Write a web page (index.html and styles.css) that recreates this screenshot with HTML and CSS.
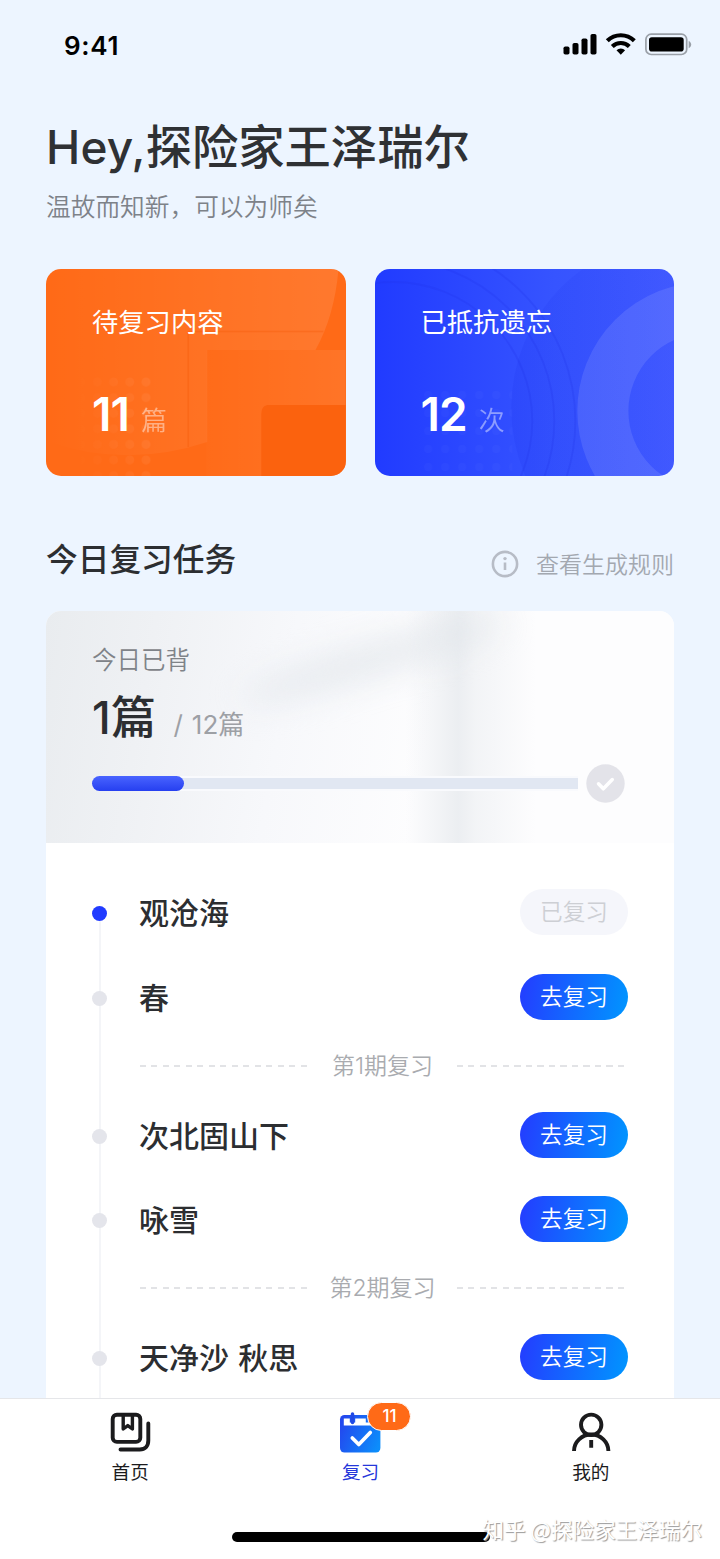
FILE: index.html
```html
<!DOCTYPE html>
<html lang="zh-CN">
<head>
<meta charset="utf-8">
<meta name="viewport" content="width=device-width, initial-scale=1">
<title>复习</title>
<link rel="stylesheet" href="styles.css">
</head>
<body>
<div class="app">
  <header class="status">
    <span class="time">9:41</span>
    <svg class="status-icons" width="130" height="24" viewBox="0 0 130 24">
      <rect x="0.500" y="13.500" width="6" height="8" rx="1.800"/>
      <rect x="9.500" y="10" width="6" height="11.500" rx="1.800"/>
      <rect x="18.500" y="5.500" width="6" height="16" rx="1.800"/>
      <rect x="27.500" y="1" width="6" height="20.500" rx="1.800"/>
      <g fill="none" stroke="#000" stroke-width="4.200">
        <path d="M44.300 7.800a19.200 19.200 0 0 1 27 0"/>
        <path d="M49.300 13.400a12.300 12.300 0 0 1 17 0"/>
      </g>
      <path d="M57.800 21.700l-4.300-4.400a6.300 6.300 0 0 1 8.600 0z"/>
      <rect x="82.900" y="1.200" width="40.800" height="20.300" rx="5.300" fill="none" stroke="#9aa0a8" stroke-width="1.700"/>
      <rect x="86" y="4.200" width="34.700" height="14.300" rx="2.800"/>
      <path d="M125.700 8v7.200c1.500-.6 2.500-2 2.500-3.600s-1-3-2.500-3.600z" fill="#9aa0a8"/>
    </svg>
  </header>

  <main class="content">
    <h1 class="title"><span class="hey">Hey,</span>探险家王泽瑞尔</h1>
    <p class="subtitle">温故而知新，可以为师矣</p>

    <section class="cards">
      <article class="card card-orange">
        <svg class="card-art" viewBox="0 0 299 207" preserveAspectRatio="none">
          <defs>
            <linearGradient id="og" x1="0" y1="0" x2="1" y2="0"><stop offset="0" stop-color="#fff" stop-opacity="0"/><stop offset="1" stop-color="#fff" stop-opacity=".1"/></linearGradient>
            <linearGradient id="oh" x1="0" y1="0" x2="1" y2="0"><stop offset="0" stop-color="#fff" stop-opacity=".01"/><stop offset="1" stop-color="#fff" stop-opacity=".07"/></linearGradient>
            <linearGradient id="df" x1="0" y1="0" x2="1" y2="0"><stop offset="0" stop-color="#fff" stop-opacity="0"/><stop offset="1" stop-color="#fff" stop-opacity=".08"/></linearGradient>
            <pattern id="dots" x="27" y="105" width="16.200" height="15.600" patternUnits="userSpaceOnUse"><circle cx="8" cy="8" r="4.600" fill="#fff"/></pattern>
            <mask id="fade"><rect x="25" y="90" width="80" height="117" fill="url(#df)"/></mask>
          </defs>
          <path d="M0 0H292Q288 47 269 81H161V173Q80 200 0 172z" fill="url(#og)"/>
          <path d="M142 62.500H277M142 62.500V178" fill="none" stroke="#f05300" stroke-opacity=".28" stroke-width="1.600"/>
          <path d="M160 81H299V136H221Q215 137 215 145V207H160z" fill="url(#oh)"/>
          <path d="M299 136H221Q215 137 215 145V207H299z" fill="#f85e08" fill-opacity=".6"/>
          <rect x="27" y="105" width="81" height="102" fill="url(#dots)" mask="url(#fade)" opacity=".75"/>
        </svg>
        <h2 class="card-name">待复习内容</h2>
        <p class="card-value"><b>11</b><span>篇</span></p>
      </article>
      <article class="card card-blue">
        <svg class="card-art" viewBox="0 0 299 207" preserveAspectRatio="none">
          <defs>
            <pattern id="bdots" x="45" y="118" width="17" height="18" patternUnits="userSpaceOnUse"><circle cx="8" cy="8" r="4" fill="#fff" fill-opacity=".02"/></pattern>
            <linearGradient id="bg1" x1="0" y1="0" x2="1" y2="0"><stop offset="0" stop-color="#2038f0" stop-opacity=".22"/><stop offset=".5" stop-color="#2038f0" stop-opacity="0"/></linearGradient>
          </defs>
          <circle cx="307" cy="139" r="171" fill="url(#bg1)"/>
          <g fill="none" stroke="#2234e8" stroke-opacity=".22" stroke-width="1.800">
            <circle cx="18" cy="152" r="139"/><circle cx="18" cy="152" r="161"/><circle cx="18" cy="152" r="182"/>
          </g>
          <circle cx="331" cy="142" r="103.500" fill="none" stroke="#fff" stroke-opacity=".1" stroke-width="51"/>
          <rect x="45" y="118" width="92" height="89" fill="url(#bdots)"/>
        </svg>
        <h2 class="card-name">已抵抗遗忘</h2>
        <p class="card-value"><b>12</b><span>次</span></p>
      </article>
    </section>

    <div class="section-head">
      <h2>今日复习任务</h2>
      <a class="rules">
        <svg width="28" height="28" viewBox="0 0 28 28"><circle cx="14" cy="14" r="12.100" fill="none" stroke="#b7bcc6" stroke-width="2.600"/><circle cx="14" cy="8.600" r="1.700" fill="#b7bcc6"/><path d="M14 12.500v7.500" stroke="#b7bcc6" stroke-width="2.600"/></svg>
        <span>查看生成规则</span>
      </a>
    </div>

    <section class="panel">
      <div class="summary">
        <p class="summary-label">今日已背</p>
        <p class="summary-count"><b>1篇</b><i>/</i><span>12篇</span></p>
        <div class="progress">
          <div class="track"><div class="fill"></div></div>
          <svg width="39" height="39" viewBox="0 0 39 39"><circle cx="19.500" cy="19.500" r="19.200" fill="#e3e3e9"/><path d="M12.500 19.800l4.800 5L26.300 15.500" fill="none" stroke="#fff" stroke-width="3.500" stroke-linecap="round" stroke-linejoin="round"/></svg>
        </div>
      </div>
      <div class="list">
        <div class="item done"><i class="dot"></i><span class="name">观沧海</span><button class="btn">已复习</button></div>
        <div class="item"><i class="dot"></i><span class="name">春</span><button class="btn">去复习</button></div>
        <div class="divider"><i></i><span class="period">第1期复习</span><i></i></div>
        <div class="item"><i class="dot"></i><span class="name">次北固山下</span><button class="btn">去复习</button></div>
        <div class="item"><i class="dot"></i><span class="name">咏雪</span><button class="btn">去复习</button></div>
        <div class="divider"><i></i><span class="period">第2期复习</span><i></i></div>
        <div class="item"><i class="dot"></i><span class="name">天净沙 秋思</span><button class="btn">去复习</button></div>
      </div>
    </section>
  </main>

  <footer class="footer">
    <nav class="tabs">
      <a class="tab">
        <svg width="42" height="42" viewBox="0 0 42 42" fill="none" stroke="#1b1b1d" stroke-width="3.900" stroke-linecap="round" stroke-linejoin="round"><rect x="3.700" y="2.700" width="27.600" height="27.200" rx="4.200"/><path d="M14.200 3v14l4.600-3.400 4.600 3.400V3" stroke-width="3.400"/><path d="M39.300 11.500V28.500c0 5.500-3.300 9-8.500 9H11.500"/></svg>
        <span>首页</span>
      </a>
      <a class="tab active">
        <span class="tab-icon">
          <svg width="42" height="42" viewBox="0 0 42 42">
            <defs><linearGradient id="cal" x1="0" y1=".3" x2="1" y2=".7"><stop offset="0" stop-color="#2348ee"/><stop offset="1" stop-color="#0c8dfb"/></linearGradient></defs>
            <rect x="1" y="3" width="40.400" height="37.500" rx="4.500" fill="url(#cal)"/>
            <path d="M4.800 6.500h6v4h5.400v-4h10.600v4h5.400v-4h6V13.500H4.800z" fill="#fff"/>
            <path d="M13.500 2v8.500" stroke="#2049e5" stroke-width="3.500" stroke-linecap="round"/>
            <path d="M13.300 26l6.500 6.500 11.500-12" fill="none" stroke="#fff" stroke-width="3.700" stroke-linecap="round" stroke-linejoin="round"/>
          </svg>
          <span class="badge">11</span>
        </span>
        <span>复习</span>
      </a>
      <a class="tab">
        <svg width="42" height="42" viewBox="0 0 42 42" fill="none" stroke="#1b1b1d" stroke-width="3.900"><circle cx="21.200" cy="12.800" r="10.200"/><path d="M4 39a17.200 16.500 0 0 1 34.400 0M21.200 28v7.800"/></svg>
        <span>我的</span>
      </a>
    </nav>
    <div class="home-bar"></div>
    <div class="watermark">知乎 @探险家王泽瑞尔</div>
  </footer>
</div>
</body>
</html>
```
FILE: styles.css
```css
* { box-sizing: border-box; margin: 0; padding: 0; }
body { font-family: "Noto Sans CJK SC", sans-serif; background: #edf5ff; color: #2c2e31; }
i { font-style: normal; }
.app { width: 720px; height: 1559px; display: flex; flex-direction: column; overflow: hidden; white-space: nowrap; }

.status { height: 90px; flex: none; display: flex; justify-content: space-between; align-items: center; padding: 2px 27px 0 64px; color: #000; }
.time { font: 600 26px/30px Inter, sans-serif; letter-spacing: .7px; }
.status-icons { margin-bottom: 2px; }

.content { flex: 1; min-height: 0; overflow: hidden; padding: 23px 46px 0; display: flex; flex-direction: column; }
.title { height: 62px; line-height: 62px; font-size: 46.300px; font-weight: 500; color: #2f3134; }
.hey { font-family: Inter, sans-serif; font-size: 46px; font-weight: 550; letter-spacing: .2px; }
.subtitle { height: 36px; margin-top: 12px; line-height: 36px; font-size: 24.700px; font-weight: 350; color: #7d8289; }

.cards { display: flex; gap: 29px; margin-top: 46px; flex: none; }
.card { position: relative; flex: 1; height: 207px; border-radius: 15px; overflow: hidden; padding: 33px 46px; color: #fff; }
.card-orange { background: #ff6a17; }
.card-blue { background: linear-gradient(90deg, #213bff, #3654ff 60%, #4159ff); }
.card-art { position: absolute; inset: 0; width: 100%; height: 100%; }
.card-name { position: relative; font-size: 26.300px; line-height: 38px; font-weight: 400; }
.card-value { position: relative; display: flex; align-items: baseline; gap: 12px; margin-top: 46px; line-height: 56px; }
.card-value b { font: 600 46px/56px Inter, sans-serif; letter-spacing: -1px; }
.card-value span { font-size: 26px; line-height: 36px; font-weight: 350; opacity: .45; transform: translateY(-1px); }

.section-head { height: 60px; flex: none; margin-top: 52px; display: flex; justify-content: space-between; align-items: center; }
.section-head h2 { font-size: 31.700px; line-height: 60px; font-weight: 500; padding-bottom: 2px; }
.rules { display: flex; align-items: center; gap: 17px; margin-top: 12px; font-size: 23px; line-height: 34px; font-weight: 350; color: #a3a8b0; }
.rules span { padding-bottom: 2px; }

.panel { flex: none; margin-top: 23px; border-radius: 15px 15px 0 0; background: #fff; overflow: hidden; }
.summary { position: relative; z-index: 0; overflow: hidden; height: 232px; padding: 30px 49px 0 46px;
  background:
    linear-gradient(90deg, transparent 360px, rgba(224,228,233,.6) 412px, rgba(230,233,237,.45) 430px, transparent 490px),
    linear-gradient(100deg, #e9ecef 0, #eff1f4 110px, #f7f8fb 250px, #fdfdfe 400px); }
.summary::before { content: ""; position: absolute; z-index: -1; left: 190px; top: 30px; width: 270px; height: 38px; border-radius: 50%; background: rgba(222,227,231,.6); transform: rotate(-17deg); filter: blur(16px); }
.summary-label { font-size: 24.500px; line-height: 36px; font-weight: 350; color: #7f8388; }
.summary-count { display: flex; align-items: baseline; height: 66px; line-height: 66px; margin-top: 8px; }
.summary-count b { font-family: Inter, "Noto Sans CJK SC", sans-serif; font-size: 45px; font-weight: 500; letter-spacing: .4px; }
.summary-count i, .summary-count span { font-family: Inter, "Noto Sans CJK SC", sans-serif; font-size: 26px; font-weight: 400; color: #9da0a5; }
.summary-count i { margin: 0 9px 0 17px; }
.progress { display: flex; align-items: center; justify-content: space-between; margin-top: 13px; }
.track { width: 486px; height: 15px; border: 2px solid #f9fafd; border-left: 0; border-right: 0; background: #e1e7f2; border-radius: 8px 0 0 8px; }
.fill { width: 92px; height: 15px; margin-top: -2px; border-radius: 8px; background: linear-gradient(#4964ff, #263ff0); }

.list { padding: 27px 46px 0; background: linear-gradient(#f4f5f8, #f4f5f8) 53px 78px / 2px 100% no-repeat, #fff; }
.item { display: flex; align-items: center; height: 84.500px; }
.dot { width: 15px; height: 15px; margin-top: 3px; border-radius: 50%; background: #e4e5eb; }
.name { flex: 1; margin-left: 32px; padding-bottom: 2px; font-size: 30px; line-height: 44px; font-weight: 500; word-spacing: 2.500px; }
.btn { width: 108px; height: 46px; border: 0; border-radius: 23px; background: linear-gradient(100deg, #243cff, #0096ff); color: #fff; font: 350 22.600px/44px "Noto Sans CJK SC", sans-serif; padding-bottom: 2px; }
.done .dot { background: #213bff; }
.done .btn { background: #f5f6fb; color: #cdcfd4; }
.divider { display: flex; justify-content: space-between; align-items: center; height: 53.500px; padding: 0 3px 0 48px; }
.divider i { width: 168px; height: 2px; background: repeating-linear-gradient(90deg, #e2e3e6 0 6px, transparent 6px 11.500px); }
.period { font-family: Inter, "Noto Sans CJK SC", sans-serif; font-size: 23px; font-weight: 350; color: #a9abaf; padding-bottom: 4px; }

.footer { position: relative; flex: none; height: 161px; background: #fff; border-top: 1px solid #e5e6e9; }
.tabs { display: flex; padding: 13px 14px 0 15px; }
.tab { flex: 1; display: flex; flex-direction: column; align-items: center; font-size: 18.600px; line-height: 28px; font-weight: 400; color: #1b1b1d; }
.tab > span:last-child { margin-top: 3px; }
.tab.active { color: #2637da; }
.tab-icon { position: relative; height: 42px; }
.badge { position: absolute; left: 28px; top: -10px; width: 44px; height: 29px; border: 1px solid #fff; border-radius: 15px; background: #ff6a17; color: #fff; font: 500 17px/27px Inter, sans-serif; text-align: center; }
.home-bar { width: 258px; height: 10px; margin: 47px 0 0 232px; border-radius: 5px; background: #000; }
.watermark { position: absolute; right: 18px; top: 114px; font-size: 21.600px; line-height: 32px; font-weight: 400; color: #fff; text-shadow: 1px 1px 1px #999; }
```
